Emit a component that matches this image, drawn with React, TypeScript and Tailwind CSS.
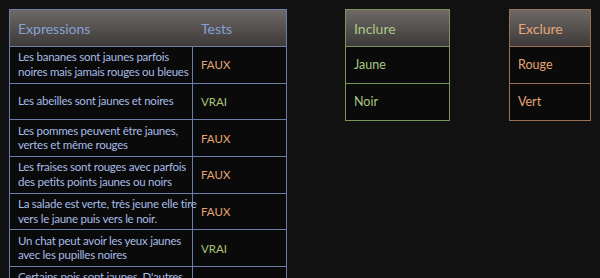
// each expression is stored line by line so the wraps stay put
const ROWS: { lines: string[]; test: 'VRAI' | 'FAUX' }[] = [
  { lines: ['Les bananes sont jaunes parfois', 'noires mais jamais rouges ou bleues'], test: 'FAUX' },
  { lines: ['Les abeilles sont jaunes et noires'], test: 'VRAI' },
  { lines: ['Les pommes peuvent être jaunes,', 'vertes et même rouges'], test: 'FAUX' },
  { lines: ['Les fraises sont rouges avec parfois', 'des petits points jaunes ou noirs'], test: 'FAUX' },
  { lines: ['La salade est verte, très jeune elle tire', 'vers le jaune puis vers le noir.'], test: 'FAUX' },
  { lines: ['Un chat peut avoir les yeux jaunes', 'avec les pupilles noires'], test: 'VRAI' },
  { lines: ["Certains pois sont jaunes. D'autres", 'sont verts'], test: 'FAUX' },
]

const headerBg = 'bg-gradient-to-b from-[#6e6966] to-[#3d3a39]'

function ListTable({ title, items, border, color, width }: {
  title: string; items: string[]; border: string; color: string; width: string
}) {
  return (
    <div className={`${width} shrink-0 border ${border}`}>
      <div className={`flex h-[36px] items-center px-[8px] text-[14px] ${headerBg} ${color}`}>{title}</div>
      {items.map(it => (
        <div key={it} className={`flex h-[37px] items-center border-t ${border} bg-[#0a0a0a] px-[8px] text-[12.5px] ${color}`}>
          {it}
        </div>
      ))}
    </div>
  )
}

export default function App() {
  return (
    <div className="h-[278px] w-[600px] overflow-hidden bg-[#111111] pl-[9px] pt-[9px]" style={{ fontFamily: 'Lato, "Open Sans", sans-serif' }}>
      <div className="flex items-start">

        {/* Expressions / Tests */}
        <div className="w-[278px] shrink-0 border border-[#6a7ea9]">
          <div className={`flex h-[36px] items-center text-[14px] text-[#86a1d6] ${headerBg}`}>
            <div className="w-[183px] pl-[8px]">Expressions</div>
            <div className="pl-[8px]">Tests</div>
          </div>
          {ROWS.map(r => (
            <div key={r.lines[0]} className="flex h-[36.7px] border-t border-[#6a7ea9] bg-[#0a0a0a]">
              <div className="flex w-[183px] shrink-0 flex-col justify-center whitespace-nowrap border-r border-[#6a7ea9] pl-[8px] text-[11.5px] leading-[14.5px] tracking-[-0.25px] text-[#a7bce6]">
                {r.lines.map(l => <span key={l}>{l}</span>)}
              </div>
              <div className={`flex items-center pl-[8px] text-[11.5px] ${r.test === 'VRAI' ? 'text-[#a9c57a]' : 'text-[#e3a472]'}`}>
                {r.test}
              </div>
            </div>
          ))}
        </div>

        <div className="ml-[58px]">
          <ListTable title="Inclure" items={['Jaune', 'Noir']} border="border-[#78965a]" color="text-[#a9c883]" width="w-[105px]" />
        </div>
        <div className="ml-[59px]">
          <ListTable title="Exclure" items={['Rouge', 'Vert']} border="border-[#9b6f51]" color="text-[#e6a777]" width="w-[82px]" />
        </div>
      </div>
    </div>
  )
}
